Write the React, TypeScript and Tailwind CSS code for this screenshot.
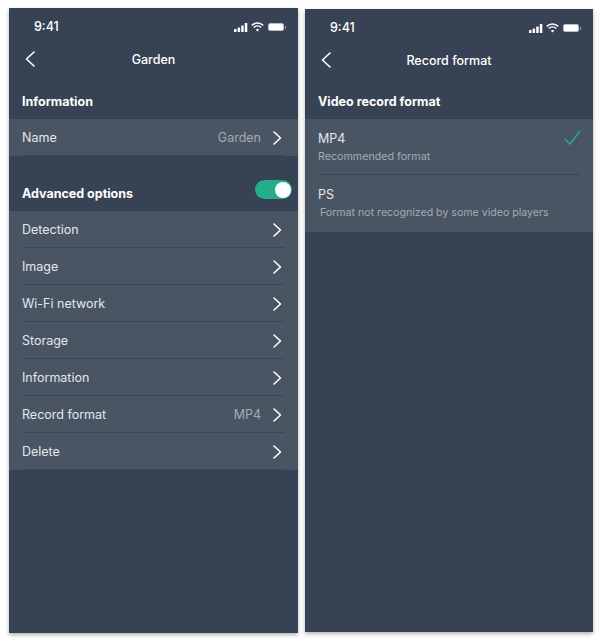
const FONT = "font-['Inter','Open_Sans',sans-serif]";

function Chevron({ left }: { left?: boolean }) {
  return (
    <svg width="10" height="16" viewBox="0 0 10 16" fill="none" stroke="white" strokeWidth="1.6" strokeLinecap="round" strokeLinejoin="round">
      <polyline points={left ? '9,1 1.5,8 9,15' : '2,2 8.5,8 2,14'} />
    </svg>
  );
}

function StatusBar() {
  return (
    <div className="flex h-[28px] items-end pl-[25px] pr-[12px]">
      <div className="flex h-[18px] w-full items-center justify-between">
        <span className="text-[12.5px] font-medium text-white">9:41</span>
        <div className="flex items-center gap-[3px]">
          <svg width="14" height="9" viewBox="0 0 14 9" fill="white">
            <rect x="0" y="6" width="2.5" height="3" rx="0.5" />
            <rect x="3.6" y="4.4" width="2.5" height="4.6" rx="0.5" />
            <rect x="7.2" y="2.4" width="2.5" height="6.6" rx="0.5" />
            <rect x="10.8" y="0" width="2.5" height="9" rx="0.5" />
          </svg>
          <svg width="13" height="10" viewBox="0 0 13 10" fill="none" stroke="white" strokeWidth="1.5">
            <path d="M0.8 3.4C4 0.3 9 0.3 12.2 3.4" />
            <path d="M2.8 5.5C4.9 3.6 8.1 3.6 10.2 5.5" />
            <path d="M6.5 9.5L4.7 7.6C5.7 6.8 7.3 6.8 8.3 7.6Z" fill="white" stroke="none" />
          </svg>
          <div className="ml-[1px] flex items-center">
            <div className="h-[8px] w-[16px] rounded-[2px] border border-[#b8bec6] bg-white" />
            <div className="ml-[1px] h-[3px] w-[1px] bg-[#9aa2ad]" />
          </div>
        </div>
      </div>
    </div>
  );
}

function Header({ title }: { title: string }) {
  return (
    <div className="relative mb-[8px] flex h-[46px] items-center justify-center pt-[2px]">
      <div className="absolute left-[16px] top-[15px]">
        <Chevron left />
      </div>
      <span className="text-[12.5px] font-medium text-white">{title}</span>
    </div>
  );
}

function Row({ label, value }: { label: string; value?: string }) {
  return (
    <div className="px-[13px]">
      <div className="flex h-[37px] items-center justify-between border-b border-[#3a4657]">
        <span className="pt-[3px] text-[12.5px] text-[#e4e7ea]">{label}</span>
        <div className="flex items-center pt-[1px]">
          {value && <span className="mr-[11px] pt-[2px] text-[12.5px] text-[#a4abb4]">{value}</span>}
          <div className="mr-[3px]">
            <Chevron />
          </div>
        </div>
      </div>
    </div>
  );
}

const advanced = [
  { label: 'Detection' },
  { label: 'Image' },
  { label: 'Wi-Fi network' },
  { label: 'Storage' },
  { label: 'Information' },
  { label: 'Record format', value: 'MP4' },
  { label: 'Delete' },
];

export default function App() {
  return (
    <div className={`flex h-[640px] w-[601px] items-start bg-white pl-[9px] pt-[8px] ${FONT}`}>
      <div className="h-[625px] w-[289px] bg-[#374354] shadow-[0_2px_4px_rgba(0,0,0,0.3)]">
        <StatusBar />
        <Header title="Garden" />
        <div className="h-[29px] px-[13px] pt-[3px] text-[12.5px] font-bold leading-[18px] text-white">
          Information
        </div>
        <div className="bg-[#4a5564]">
          <Row label="Name" value="Garden" />
        </div>
        <div className="flex h-[55px] items-end justify-between pb-[8px] pl-[13px] pr-[6px]">
          <span className="text-[12.5px] font-bold leading-[18px] text-white">Advanced options</span>
          <div className="mb-[4px] flex h-[19px] w-[37px] items-center justify-end rounded-full bg-[#24ad8d] pr-[1px]">
            <div className="h-[16px] w-[16px] rounded-full bg-white" />
          </div>
        </div>
        <div className="bg-[#4a5564]">
          {advanced.map((r) => (
            <Row key={r.label} label={r.label} value={r.value} />
          ))}
        </div>
      </div>

      <div className="ml-[7px] mt-[1px] h-[623px] w-[288px] bg-[#374354] shadow-[0_2px_4px_rgba(0,0,0,0.3)]">
        <StatusBar />
        <Header title="Record format" />
        <div className="h-[28px] px-[13px] pt-[2px] text-[12.5px] font-bold leading-[18px] text-white">
          Video record format
        </div>
        <div className="bg-[#4a5564] px-[13px]">
          <div className="relative h-[56px] border-b border-[#3a4657] pt-[11px]">
            <div className="text-[12.5px] leading-[18px] text-[#e4e7ea]">MP4</div>
            <div className="text-[10.7px] leading-[18px] text-[#a4abb4]">Recommended format</div>
            <svg className="absolute right-[-1px] top-[11px]" width="17" height="15" viewBox="0 0 17 15" fill="none" stroke="#24ad8d" strokeWidth="1.5">
              <polyline points="1,9 6,14 16,1" />
            </svg>
          </div>
          <div className="h-[57px] pt-[11px]">
            <div className="text-[12.5px] leading-[18px] text-[#e4e7ea]">PS</div>
            <div className="pl-[2px] text-[10.6px] leading-[18px] text-[#a4abb4]">
              Format not recognized by some video players
            </div>
          </div>
        </div>
      </div>
    </div>
  );
}
